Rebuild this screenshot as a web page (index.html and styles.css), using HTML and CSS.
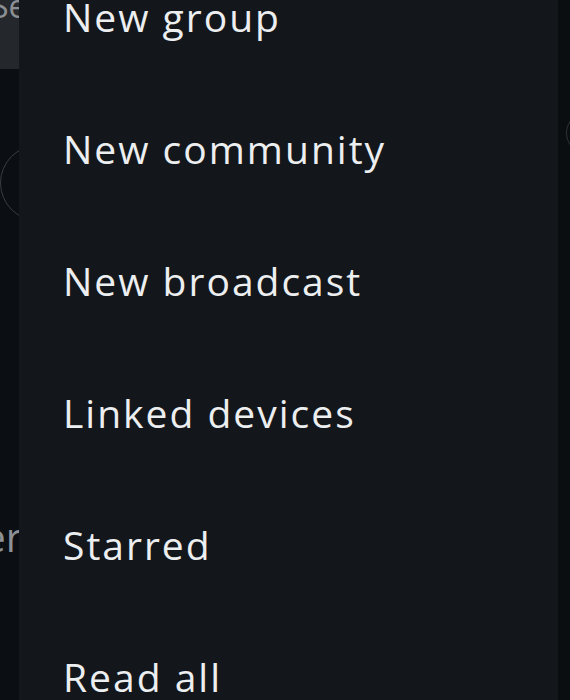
FILE: index.html
```html
<!DOCTYPE html>
<html>
<head>
<meta charset="utf-8">
<link rel="stylesheet" href="styles.css">
</head>
<body>
<div class="screen">
  <div class="side-left">
    <div class="search"><span class="search-text">Search</span></div>
    <div class="avatar"></div>
    <div class="label-er">Archiver</div>
  </div>
  <div class="menu">
    <ul class="menu-list">
      <li class="menu-item">New group</li>
      <li class="menu-item">New community</li>
      <li class="menu-item">New broadcast</li>
      <li class="menu-item">Linked devices</li>
      <li class="menu-item">Starred</li>
      <li class="menu-item">Read all</li>
    </ul>
  </div>
  <div class="side-right">
    <div class="avatar-right"></div>
  </div>
</div>
</body>
</html>
```

FILE: styles.css
```css
html, body {
  margin: 0;
  padding: 0;
  background: #0b0e12;
}
.screen {
  display: flex;
  width: 570px;
  height: 700px;
  overflow: hidden;
  font-family: "Open Sans", "Noto Sans", sans-serif;
}
.side-left {
  width: 19px;
  flex: none;
  overflow: hidden;
  position: relative;
  background: #0b0e12;
}
.search {
  height: 69px;
  background: #24272b;
  position: relative;
  overflow: hidden;
}
.search-text {
  position: absolute;
  left: -9px;
  top: -14px;
  width: 28px;
  overflow: hidden;
  font-size: 32px;
  line-height: 40px;
  color: #8c8f93;
  white-space: nowrap;
}
.avatar {
  position: absolute;
  left: 0;
  top: 145px;
  width: 74px;
  height: 74px;
  border: 1.5px solid #3a3d41;
  border-radius: 50%;
}
.label-er {
  position: absolute;
  right: -3px;
  top: 510px;
  font-size: 40px;
  line-height: 54px;
  color: #8d9196;
  white-space: nowrap;
}
.menu {
  flex: 1;
  background: #13171b;
  overflow: hidden;
}
.menu-list {
  list-style: none;
  margin: -49px 0 0 0;
  padding: 0 0 0 44px;
}
.menu-item {
  height: 132px;
  line-height: 132px;
  font-size: 39px;
  letter-spacing: 2px;
  color: #eceef0;
  white-space: nowrap;
}
.side-right {
  width: 12px;
  flex: none;
  position: relative;
  overflow: hidden;
  background: #0a0e11;
}
.avatar-right {
  position: absolute;
  left: 8px;
  top: 112px;
  width: 40px;
  height: 40px;
  border: 1.5px solid #2e3236;
  border-radius: 50%;
}
```
